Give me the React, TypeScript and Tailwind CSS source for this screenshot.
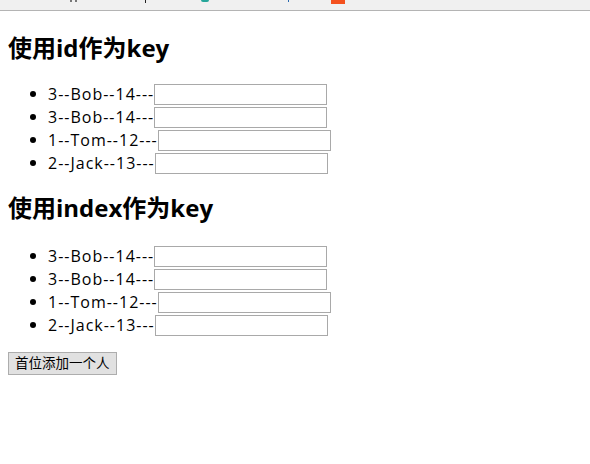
import React from "react";

const items = [
  { id: 3, name: "Bob", age: 14 },
  { id: 3, name: "Bob", age: 14 },
  { id: 1, name: "Tom", age: 12 },
  { id: 2, name: "Jack", age: 13 },
];

function List({ mb }: { mb: string }) {
  return (
    <ul className={`list-disc pl-[40px] ${mb}`}>
      {items.map((p, i) => (
        <li key={i} className="leading-[23px] h-[23px] text-[16px] text-black">
          <span className="align-middle tracking-[1px]">{`${p.id}--${p.name}--${p.age}---`}</span>
          <input
            type="text"
            className="w-[173px] h-[21px] border border-[#a9a9a9] bg-white align-middle outline-none"
          />
        </li>
      ))}
    </ul>
  );
}

export default function App() {
  return (
    <div
      className="w-[590px] h-[464px] bg-white overflow-hidden"
      style={{ fontFamily: '"Open Sans", "Noto Sans CJK SC", sans-serif' }}
    >
      <div className="flex items-start h-[11px] bg-[#f0f0f0] border-b border-[#b4b4b4] pl-[70px]">
        <div className="w-[2px] h-[2px] bg-[#777]" />
        <div className="ml-[3px] w-[2px] h-[2px] bg-[#777]" />
        <div className="ml-[68px] w-[1px] h-[3px] bg-[#222]" />
        <div className="ml-[55px] w-[8px] h-[2px] rounded-b bg-[#26a69a]" />
        <div className="ml-[79px] w-[1px] h-[2px] bg-[#2a6ab0]" />
        <div className="ml-[42px] w-[14px] h-[4px] bg-[#f4511e]" />
      </div>
      <div className="px-[8px]">
        <h2 className="text-[24px] font-bold leading-[32px] mt-[21px] mb-[18px] text-black">使用id作为key</h2>
        <List mb="mb-0" />
        <h2 className="text-[24px] font-bold leading-[32px] mt-[18px] mb-[20px] text-black">使用index作为key</h2>
        <List mb="mb-[14px]" />
        <button className="h-[23px] px-[6px] border border-[#adadad] bg-[#e1e1e1] text-[13.5px] leading-[20px] text-black">
          首位添加一个人
        </button>
      </div>
    </div>
  );
}
